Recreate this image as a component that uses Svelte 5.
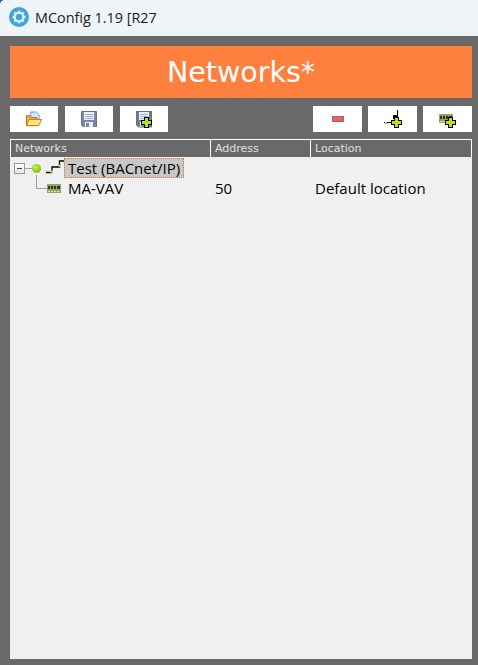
<script>
	const columns = [
		{ label: 'Networks', cls: 'col-net' },
		{ label: 'Address', cls: 'col-addr' },
		{ label: 'Location', cls: 'col-loc' }
	];
</script>

{#snippet floppy(body = '#7d86a3')}
	<path d="M0.500 0.500h15v15.500H2.500l-2-2z" fill={body} stroke="#666f8c" />
	<rect x="3" y="1" width="10" height="8" fill="#e8f0fb" />
	<path d="M4 3.500h8M4 5.500h8M4 7.500h8" stroke="#9db4d8" />
	<rect x="4" y="11" width="8" height="5" fill="#f1f1f1" />
	<rect x="5" y="12" width="3" height="4" fill="#7d86a3" />
{/snippet}

{#snippet plus(x, y)}
	<rect x={x + 3} {y} width="5" height="11" fill="#000" />
	<rect {x} y={y + 3} width="11" height="5" fill="#000" />
	<rect x={x + 4} y={y + 1} width="3" height="9" fill="#c6e000" />
	<rect x={x + 1} y={y + 4} width="9" height="3" fill="#c6e000" />
{/snippet}

{#snippet chip()}
	<rect x="0" y="0" width="14" height="9" fill="#93a56c" />
	<rect x="1" y="2" width="2" height="3" fill="#2c3a22" />
	<rect x="4" y="2" width="2" height="3" fill="#2c3a22" />
	<rect x="7" y="2" width="2" height="3" fill="#2c3a22" />
	<rect x="10" y="2" width="3" height="3" fill="#2c3a22" />
	<path d="M1 7.500h2M4 7.500h2M7 7.500h2M10 7.500h2" stroke="#e6ea9c" />
{/snippet}

<div class="window">
	<span class="corner"></span>
	<header class="titlebar">
		<svg class="app-icon" width="20" height="20" viewBox="0 0 20 20">
			<circle cx="10" cy="10" r="10" fill="#3ea6de" />
			<circle cx="10" cy="10" r="4.400" fill="none" stroke="#e4f3fb" stroke-width="2.400" />
			<path
				d="M10 3.500v2.500M10 14v2.500M3.500 10H6M14 10h2.500M5.400 5.400l1.800 1.800M12.800 12.800l1.800 1.800M14.600 5.400l-1.800 1.800M7.200 12.800l-1.800 1.800"
				stroke="#e4f3fb"
				stroke-width="1.800"
			/>
			<circle cx="10" cy="10" r="1.800" fill="#3ea6de" />
		</svg>
		<span class="app-title">MConfig 1.19 [R27</span>
	</header>

	<main class="content">
		<h1 class="banner">Networks*</h1>

		<div class="toolbar">
			<div class="group">
				<button class="tool" aria-label="Open">
					<svg width="16" height="16" viewBox="0 0 17 16">
						<path d="M5 0.500h6l3 3V10H5z" fill="#cfe6fb" stroke="#5aa0dc" />
						<path d="M0.500 4.500h4l1 2h6v8.500H0.500z" fill="#f0b640" stroke="#b5670f" />
						<path d="M3 8.500h13.500l-3 6.500H0.700z" fill="#ffe78a" stroke="#c47a12" />
					</svg>
				</button>
				<button class="tool" aria-label="Save">
					<svg width="16" height="16" viewBox="0 0 16 16">{@render floppy()}</svg>
				</button>
				<button class="tool" aria-label="Save as">
					<svg width="16" height="18" viewBox="0 -1 16 18">
						{@render floppy('#6f7f86')}
						{@render plus(5, 6)}
					</svg>
				</button>
			</div>
			<div class="group right">
				<button class="tool" aria-label="Remove">
					<svg width="12" height="6" viewBox="0 0 12 6">
						<rect x=".5" y=".5" width="11" height="5" fill="#ff5a5a" stroke="#8a7070" />
					</svg>
				</button>
				<button class="tool" aria-label="Add network">
					<svg width="19" height="18" viewBox="0 0 19 18">
						<path d="M1 12.500h7M14.500 0v6" fill="none" stroke="#000" />
						<rect x="2" y="12" width="2" height="2" fill="#c9c94e" />
						<rect x="10" y="5" width="5" height="4" fill="#000" />
						{@render plus(8, 7)}
					</svg>
				</button>
				<button class="tool" aria-label="Add device">
					<svg width="17" height="18" viewBox="0 0 17 18">
						<g transform="translate(0 4)">{@render chip()}</g>
						{@render plus(6, 7)}
					</svg>
				</button>
			</div>
		</div>

		<section class="tree">
			<div class="tree-head">
				{#each columns as col}
					<div class="head-cell {col.cls}">{col.label}</div>
				{/each}
			</div>

			<div class="row network">
				<div class="col-net node">
					<span class="expander"></span>
					<span class="dash"></span>
					<span class="status"></span>
					<svg class="node-icon" width="18" height="16" viewBox="0 2 18 16">
						<path d="M0 14.500h6V9h7.500V3H18" fill="none" stroke="#000" stroke-width="1.300" />
						<rect x="4.500" y="12.500" width="2.500" height="2.500" fill="#c9c94e" />
						<rect x="12.500" y="6.500" width="2.500" height="2.500" fill="#c9c94e" />
					</svg>
					<span class="label selected">Test (BACnet/IP)</span>
				</div>
			</div>
			<div class="row device">
				<div class="col-net node">
					<span class="elbow"></span>
					<svg class="chip-icon" width="14" height="9" viewBox="0 0 14 9">{@render chip()}</svg>
					<span class="label">MA-VAV</span>
				</div>
				<div class="col-addr cell">50</div>
				<div class="col-loc cell">Default location</div>
			</div>
		</section>
	</main>
</div>

<style>
	:global(body) {
		background: #696969;
	}
	.window {
		width: 478px;
		height: 665px;
		display: flex;
		flex-direction: column;
		background: #696969;
		font-family: 'DejaVu Sans', sans-serif;
		overflow: hidden;
		position: relative;
	}
	.corner {
		position: absolute;
		left: 0;
		top: 0;
		width: 4px;
		height: 4px;
		background: radial-gradient(circle at 100% 100%, transparent 3.500px, #2a5f9e 4px);
	}
	.titlebar {
		height: 36px;
		flex: none;
		display: flex;
		align-items: center;
		gap: 6px;
		padding: 0 0 2px 9px;
		box-sizing: border-box;
		background: #eff4f9;
	}
	.app-title {
		font-family: 'Open Sans', sans-serif;
		font-size: 14.4px;
		color: #1a1a1a;
	}
	.content {
		flex: 1;
		display: flex;
		flex-direction: column;
		padding: 10px 6px 6px 10px;
		min-height: 0;
	}
	.banner {
		margin: 0;
		height: 52px;
		flex: none;
		display: flex;
		align-items: center;
		justify-content: center;
		background: #ff7f3f;
		color: #fff;
		font-size: 28.5px;
		font-weight: 400;
	}
	.toolbar {
		display: flex;
		justify-content: space-between;
		margin-top: 8px;
		height: 26px;
		flex: none;
	}
	.group {
		display: flex;
		gap: 7px;
	}
	.group.right {
		gap: 6px;
	}
	.tool {
		width: 48px;
		height: 26px;
		padding: 0;
		border: 0;
		background: #fff;
		display: flex;
		align-items: center;
		justify-content: center;
	}
	.group.right .tool {
		width: 49px;
	}
	.tree {
		flex: 1;
		margin-top: 7px;
		background: #f0f0f0;
		min-height: 0;
		font-family: 'Open Sans', sans-serif;
		font-size: 15px;
		color: #000;
	}
	.tree-head {
		display: flex;
		height: 18px;
		background: #696969;
		border: 1px solid #fff;
		border-bottom: 0;
		box-sizing: border-box;
		color: #e0e0e0;
		font-family: 'DejaVu Sans', sans-serif;
		font-size: 11px;
	}
	.head-cell {
		line-height: 18px;
		padding-left: 4px;
		box-sizing: border-box;
		border-right: 1px solid #fff;
	}
	.head-cell:last-child {
		border-right: 0;
	}
	.tree-head .col-net {
		width: 200px;
	}
	.tree-head .col-addr {
		width: 100px;
	}
	.tree-head .col-loc {
		flex: 1;
	}
	.row {
		display: flex;
		height: 20px;
		align-items: center;
	}
	.row.network {
		margin-top: 1px;
	}
	.row .col-net {
		width: 201px;
	}
	.row .col-addr {
		width: 100px;
	}
	.node {
		display: flex;
		align-items: center;
		height: 100%;
	}
	.cell {
		padding-left: 4px;
		box-sizing: border-box;
	}
	.expander {
		width: 9px;
		height: 9px;
		margin-left: 4px;
		border: 1px solid #999;
		background: linear-gradient(#fff, #e4e4e4);
		position: relative;
		flex: none;
	}
	.expander::after {
		content: '';
		position: absolute;
		left: 2px;
		top: 4px;
		width: 5px;
		height: 1px;
		background: #2a4a8a;
	}
	.dash {
		width: 7px;
		height: 1px;
		background: #a0a0a0;
		flex: none;
	}
	.status {
		width: 9px;
		height: 9px;
		border-radius: 50%;
		background: radial-gradient(circle at 40% 35%, #c9f04a, #6ea800);
		flex: none;
	}
	.node-icon {
		margin-left: 5px;
		flex: none;
	}
	.label {
		margin-left: 0;
		padding: 0 4px;
		white-space: nowrap;
	}
	.selected {
		background: #c8c8c8;
		outline: 1px dotted #d9772a;
		outline-offset: -1px;
		line-height: 20px;
	}
	.elbow {
		width: 11px;
		height: 14px;
		margin: -13px 0 0 26px;
		border-left: 1px solid #a0a0a0;
		border-bottom: 1px solid #a0a0a0;
		flex: none;
		box-sizing: border-box;
	}
	.chip-icon {
		flex: none;
		margin-top: 1px;
	}
	.device .label {
		margin-left: 3px;
	}
</style>
